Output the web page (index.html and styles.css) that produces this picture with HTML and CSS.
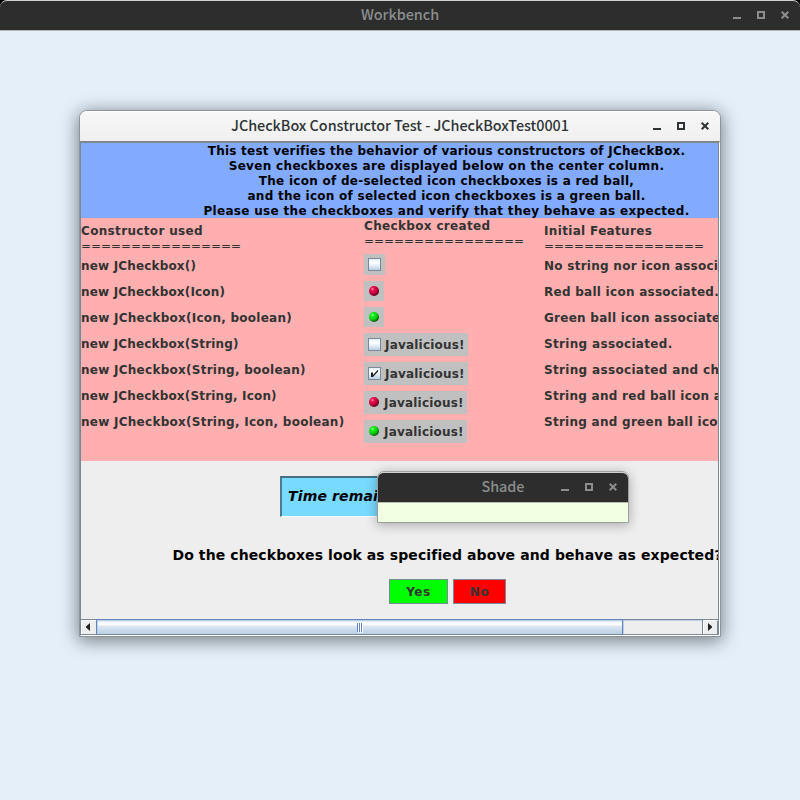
FILE: index.html
```
<!DOCTYPE html>
<html lang="en">
<head>
<meta charset="utf-8">
<title>Workbench</title>
<link rel="stylesheet" href="styles.css">
</head>
<body>
<svg class="defs" width="0" height="0">
  <defs>
    <radialGradient id="red" cx="35%" cy="30%" r="75%">
      <stop offset="0" stop-color="#ff9ab8"/><stop offset=".22" stop-color="#ee1450"/><stop offset=".6" stop-color="#c00038"/><stop offset="1" stop-color="#4a0014"/>
    </radialGradient>
    <radialGradient id="green" cx="35%" cy="30%" r="75%">
      <stop offset="0" stop-color="#a8ff98"/><stop offset=".22" stop-color="#10f018"/><stop offset=".6" stop-color="#06cc10"/><stop offset="1" stop-color="#034a06"/>
    </radialGradient>
    <g id="controls">
      <path d="M1 10h8M26 4h6v6h-6z" fill="none" stroke="currentColor" stroke-width="2"/>
      <path d="M49.7 3.7l6.6 6.6M56.3 3.7l-6.6 6.6" fill="none" stroke="currentColor" stroke-width="2"/>
    </g>
  </defs>
</svg>

<header class="titlebar dark workbench">
  <h1 class="title">Workbench</h1>
  <svg class="controls" width="60" height="14"><use href="#controls"/></svg>
</header>

<section class="window main">
  <header class="titlebar light">
    <h2 class="title">JCheckBox Constructor Test - JCheckBoxTest0001</h2>
    <svg class="controls" width="60" height="14"><use href="#controls"/></svg>
  </header>
  <div class="frame">
    <div class="viewport">
      <div class="intro">
        <p class="l1">This test verifies the behavior of various constructors of JCheckBox.</p>
        <p class="l2">Seven checkboxes are displayed below on the center column.</p>
        <p class="l3">The icon of de-selected icon checkboxes is a red ball,</p>
        <p class="l3">and the icon of selected icon checkboxes is a green ball.</p>
        <p class="l2">Please use the checkboxes and verify that they behave as expected.</p>
      </div>
      <div class="table">
        <div class="col first">
          <h3>Constructor used</h3>
          <div class="rule">================</div>
          <ul>
            <li class="tight">new JCheckbox()</li>
            <li class="tight">new JCheckbox(Icon)</li>
            <li>new JCheckbox(Icon, boolean)</li>
            <li class="tight">new JCheckbox(String)</li>
            <li>new JCheckbox(String, boolean)</li>
            <li class="tight">new JCheckbox(String, Icon)</li>
            <li>new JCheckbox(String, Icon, boolean)</li>
          </ul>
        </div>
        <div class="col middle">
          <h3>Checkbox created</h3>
          <div class="rule">================</div>
          <div class="checks">
            <div class="check bare"><span class="box"></span></div>
            <div class="check ball"><svg width="10" height="10"><circle cx="5" cy="5" r="5" fill="url(#red)"/></svg></div>
            <div class="check ball"><svg width="10" height="10"><circle cx="5" cy="5" r="5" fill="url(#green)"/></svg></div>
            <div class="check"><span class="box"></span><label>Javalicious!</label></div>
            <div class="check"><span class="box"><svg width="11" height="11"><path d="M2 4.5h2v2.4L8.6 2H9v1.6L4 9H2z" fill="#222"/></svg></span><label>Javalicious!</label></div>
            <div class="check withball"><svg width="10" height="10"><circle cx="5" cy="5" r="5" fill="url(#red)"/></svg><label>Javalicious!</label></div>
            <div class="check withball"><svg width="10" height="10"><circle cx="5" cy="5" r="5" fill="url(#green)"/></svg><label>Javalicious!</label></div>
          </div>
        </div>
        <div class="col last">
          <h3>Initial Features</h3>
          <div class="rule">================</div>
          <ul>
            <li>No string nor icon associated.</li>
            <li>Red ball icon associated.</li>
            <li>Green ball icon associated.</li>
            <li class="wide">String associated.</li>
            <li class="wide">String associated and checked.</li>
            <li>String and red ball icon associated.</li>
            <li>String and green ball icon associated.</li>
          </ul>
        </div>
      </div>
      <div class="bottom">
        <div class="timer">Time remaining:</div>
        <p class="question">Do the checkboxes look as specified above and behave as expected?</p>
        <div class="buttons"><button class="yes">Yes</button><button class="no">No</button></div>
      </div>
    </div>
    <div class="scrollbar">
      <span class="arrow left"><svg width="4" height="8"><path d="M4 0v8L0 4.5v-1z" fill="#222"/></svg></span>
      <span class="thumb"><i></i><i></i><i></i></span>
      <span class="track"></span>
      <span class="arrow right"><svg width="4" height="8"><path d="M0 0v8l4-3.5v-1z" fill="#222"/></svg></span>
    </div>
  </div>
</section>

<section class="window shade">
  <header class="titlebar dark">
    <h2 class="title">Shade</h2>
    <svg class="controls" width="60" height="14"><use href="#controls"/></svg>
  </header>
  <div class="blank"></div>
</section>
</body>
</html>
```
FILE: styles.css
```
* { box-sizing: border-box; margin: 0; padding: 0; }
html { background: #000; }
body { width: 800px; height: 800px; overflow: hidden; position: relative;
  background: linear-gradient(#000 0 20px, #e4effa 20px);
  font: bold 12px/15px "DejaVu Sans", sans-serif; letter-spacing: .265px;
  font-variant-ligatures: none; color: #333; white-space: nowrap; }
.defs { position: absolute; }
ul { list-style: none; }

.titlebar { position: relative; display: flex; align-items: center; justify-content: center; padding-bottom: 4px; }
.title { font: 500 14.4px/20px "Noto Sans CJK SC", sans-serif; letter-spacing: -.04px; }
.controls { position: absolute; right: 8px; top: 7px; }
.dark { background: #2d2d2d; color: #8b8e8d; border-top: 1px solid #ced3d1; border-bottom: 1px solid #b9b7b1; }
.light { background: linear-gradient(#f7f7f7, #f0f0f0); color: #2e3436; border-top: 1px solid #fff; }
.workbench { height: 31px; border-radius: 7px 7px 0 0; }

.window { position: absolute; }
.main { left: 79px; top: 110px; width: 642px; height: 527px; border: 1px solid #8b949b;
  border-radius: 8px 8px 0 0; background: #f0f0f0;
  box-shadow: 0 3px 18px 1px rgba(0,0,0,.48); }
.main .titlebar { height: 30px; border-radius: 7px 7px 0 0; }
.frame { height: 495px; border-top: 2px solid #7f878d; border-left: 1px solid #7a8a99;
  border-right: 1px solid #fff; border-bottom: 1px solid #fff; background: #eee; }
.viewport { height: 476px; overflow: hidden; border-right: 1px solid #7a8a99; }
.intro { height: 75px; width: 731px; padding-top: 1px; background: #82aaff; color: #000; text-align: center; }
.l1 { letter-spacing: .227px; }
.l2 { letter-spacing: .32px; }
.l3 { letter-spacing: .265px; }
.table { display: grid; grid-template-columns: 283px 180px 268px; width: 731px; height: 243px; background: #ffafaf; }
.col { padding-top: 5px; }
.middle { padding-top: 0; }
h3 { font: inherit; height: 15px; line-height: 17px; letter-spacing: .34px; }
.rule { height: 16px; line-height: 16px; font-weight: normal; letter-spacing: -.055px; }
.col ul { padding-top: 4px; }
.col li { height: 26px; line-height: 17px; }
.col .tight { letter-spacing: .17px; }
.col .wide { letter-spacing: .33px; }
.checks { padding-top: 5px; display: flex; flex-direction: column; align-items: flex-start; gap: 6px; }
.check { display: flex; align-items: center; height: 23px; width: 104px; padding-left: 4px; gap: 4px; background: #c0c0c0; letter-spacing: .2px; }
.check label { padding-top: 2px; }
.check.bare { width: 21px; height: 21px; }
.check.ball { width: 20px; height: 20px; padding-left: 5px; }
.check.withball { width: 103px; padding-left: 5px; gap: 5px; }
.withball svg { margin-bottom: 1px; }
.box { display: block; width: 13px; height: 13px; border: 1px solid #7a8a99; background: linear-gradient(#e4eef7, #fff 35%, #b8cfe5); }
.box svg { display: block; }

.bottom { width: 733px; height: 158px; padding-top: 15px; display: flex; flex-direction: column; align-items: center; }
.timer { width: 335px; height: 41px; padding-left: 6px; border: 1px solid #4d7f95; border-top: 2px solid #466f80;
  border-left: 2px solid #4b7c91; border-bottom: 1px solid #fff; background: #78daff; color: #000;
  font: italic bold 14px/37px "DejaVu Sans", sans-serif; letter-spacing: .15px; }
.question { margin-top: 29px; height: 20px; font-size: 14px; line-height: 19px; letter-spacing: .1px; color: #000; }
.buttons { margin-top: 13px; display: flex; gap: 5px; }
button { height: 25px; padding-top: 1px; border: 1px solid #7a8a99; font: bold 12px/15px "DejaVu Sans", sans-serif; letter-spacing: .6px; color: #333; }
.yes { width: 59px; background: #0f0; }
.no { width: 53px; background: #f00; }

.scrollbar { display: flex; height: 16px; border-top: 1px solid #7a8a99; border-bottom: 1px solid #7a8a99; }
.arrow { display: flex; align-items: center; justify-content: center; padding: 0 2px 1px 0; background: #eee; border-top: 1px solid #fff; border-left: 1px solid #fff; }
.left { width: 15px; }
.right { width: 16px; border-right: 2px solid #7a8a99; }
.thumb { width: 527px; margin-top: -1px; display: flex; gap: 1px; justify-content: center; align-items: center;
  border: 1px solid #6382bf; border-bottom: 0; box-shadow: inset 1px 1px #b8cfe5;
  background: linear-gradient(#d8e6f3, #fff 30%, #dce7f2 45%, #b8cfe5); }
.thumb i { width: 1px; height: 9px; background: #6382bf; box-shadow: 1px 1px #fff; }
.track { width: 80px; border-right: 1px solid #7a8a99; box-shadow: inset 1px 1px #b8cfe5; background: #eee; }

.shade { left: 377px; top: 471px; width: 252px; height: 52px; border: 1px solid #9c9f9b; border-radius: 7px 7px 0 0;
  background: #f1ffe3; box-shadow: 0 2px 12px rgba(0,0,0,.3); }
.shade .titlebar { height: 31px; border-radius: 6px 6px 0 0; }
```
